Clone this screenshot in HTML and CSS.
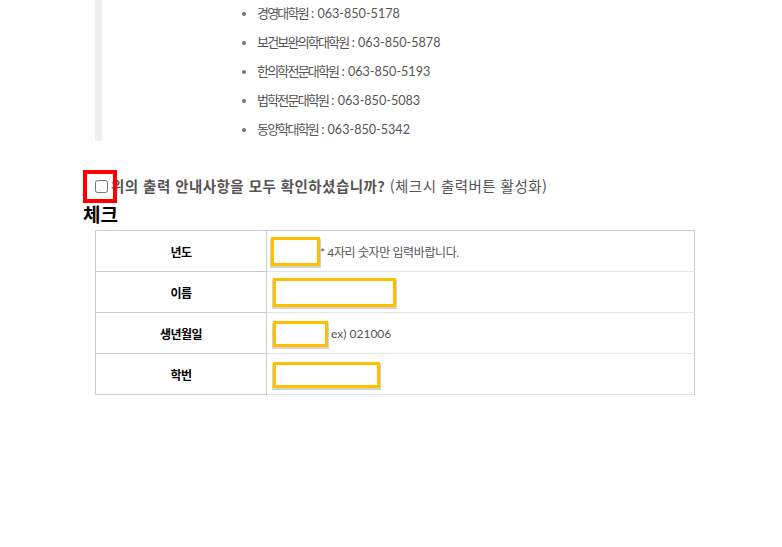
FILE: index.html
```html
<!DOCTYPE html>
<html lang="ko">
<head>
<meta charset="utf-8">
<title>출력 확인</title>
<link rel="stylesheet" href="styles.css">
</head>
<body>
<div class="page">
  <div class="notice">
    <ul class="contacts">
      <li><span class="ko">경영대학원</span> : 063-850-5178</li>
      <li><span class="ko">보건보완의학대학원</span> : 063-850-5878</li>
      <li><span class="ko">한의학전문대학원</span> : 063-850-5193</li>
      <li><span class="ko">법학전문대학원</span> : 063-850-5083</li>
      <li><span class="ko">동양학대학원</span> : 063-850-5342</li>
    </ul>
  </div>

  <div class="agree">
    <span class="cbwrap"><input type="checkbox" class="cb"><span class="mark"></span></span>
    <label class="agree-text"><strong>위의 출력 안내사항을 모두 확인하셨습니까?</strong> (체크시 출력버튼 활성화)</label>
  </div>

  <h2 class="title">체크</h2>

  <table class="form">
    <tr>
      <th>년도</th>
      <td><input type="text" class="in in-year"><span class="hint">* 4자리 숫자만 입력바랍니다.</span></td>
    </tr>
    <tr>
      <th>이름</th>
      <td><input type="text" class="in in-name"></td>
    </tr>
    <tr>
      <th>생년월일</th>
      <td><input type="text" class="in in-birth"><span class="hint hint-ex">ex) 021006</span></td>
    </tr>
    <tr>
      <th>학번</th>
      <td><input type="text" class="in in-id"></td>
    </tr>
  </table>
</div>
</body>
</html>
```

FILE: styles.css
```css
html, body {
  margin: 0;
  padding: 0;
  background: #fff;
}
body {
  font-family: Lato, "Noto Sans CJK KR", sans-serif;
  color: #555;
}
.page {
  padding-left: 83px;
  width: 620px;
}
.notice {
  margin-left: 12px;
  border-left: 7px solid #efefef;
  height: 141px;
  box-sizing: border-box;
  overflow: hidden;
}
.contacts {
  margin: -1px 0 0 0;
  padding: 0 0 0 155px;
  list-style: disc;
  font-size: 12.6px;
  color: #555;
}
.contacts li {
  line-height: 29px;
  height: 29px;
}
.contacts li::marker {
  color: #777;
}
.contacts .ko {
  font-size: 13px;
  letter-spacing: -1.8px;
}
.agree {
  margin-top: 35px;
  height: 20px;
  display: flex;
  align-items: center;
  font-family: "Noto Sans CJK KR", sans-serif;
  font-size: 14.5px;
  letter-spacing: 0.45px;
  color: #555;
  margin-left: 12px;
}
.cbwrap {
  position: relative;
  display: inline-flex;
  width: 13px;
  height: 13px;
  margin-right: 3px;
}
.cb {
  margin: 0;
  width: 13px;
  height: 13px;
}
.mark {
  position: absolute;
  top: -10px;
  left: -12px;
  width: 34px;
  height: 33px;
  box-sizing: border-box;
  border: 4px solid #f00;
  pointer-events: none;
}
.agree-text {
  line-height: 20px;
  white-space: nowrap;
}
.agree-text strong {
  font-weight: 700;
}
.title {
  margin: 6px 0 0 0;
  font-family: "Noto Sans CJK KR", sans-serif;
  font-size: 19px;
  line-height: 24px;
  font-weight: 700;
  color: #000;
}
.form {
  margin: 4px 0 0 12px;
  width: 600px;
  border-collapse: collapse;
  border: 1px solid #ccc;
}
.form th {
  width: 170px;
  height: 40px;
  padding: 0;
  border: 1px solid #ccc;
  font-family: "Noto Sans CJK KR", sans-serif;
  font-size: 12px;
  font-weight: 700;
  letter-spacing: -0.5px;
  color: #000;
  text-align: center;
  vertical-align: middle;
}
.form td {
  height: 40px;
  padding: 0 0 0 6px;
  border-bottom: 1px solid #e3e3e3;
  vertical-align: middle;
}
.in {
  box-sizing: border-box;
  margin: 1px 0 0 0;
  padding: 0;
  border: 3px solid #ffc000;
  background: #fff;
  box-shadow: 1px 2px 0 #d2d2d2, -1px 2px 0 #d2d2d2;
  vertical-align: middle;
  outline: none;
}
.in-year { width: 49px; height: 29px; margin-left: -2px; }
.in-name { width: 123px; height: 29px; }
.in-birth { width: 55px; height: 26px; }
.in-id { width: 107px; height: 26px; }
.hint {
  font-family: Lato, "Noto Sans CJK KR", sans-serif;
  font-size: 12px;
  letter-spacing: -0.4px;
  color: #555;
  vertical-align: middle;
  margin-left: 0;
}
.hint-ex {
  margin-left: 3px;
  letter-spacing: 0;
}
```
